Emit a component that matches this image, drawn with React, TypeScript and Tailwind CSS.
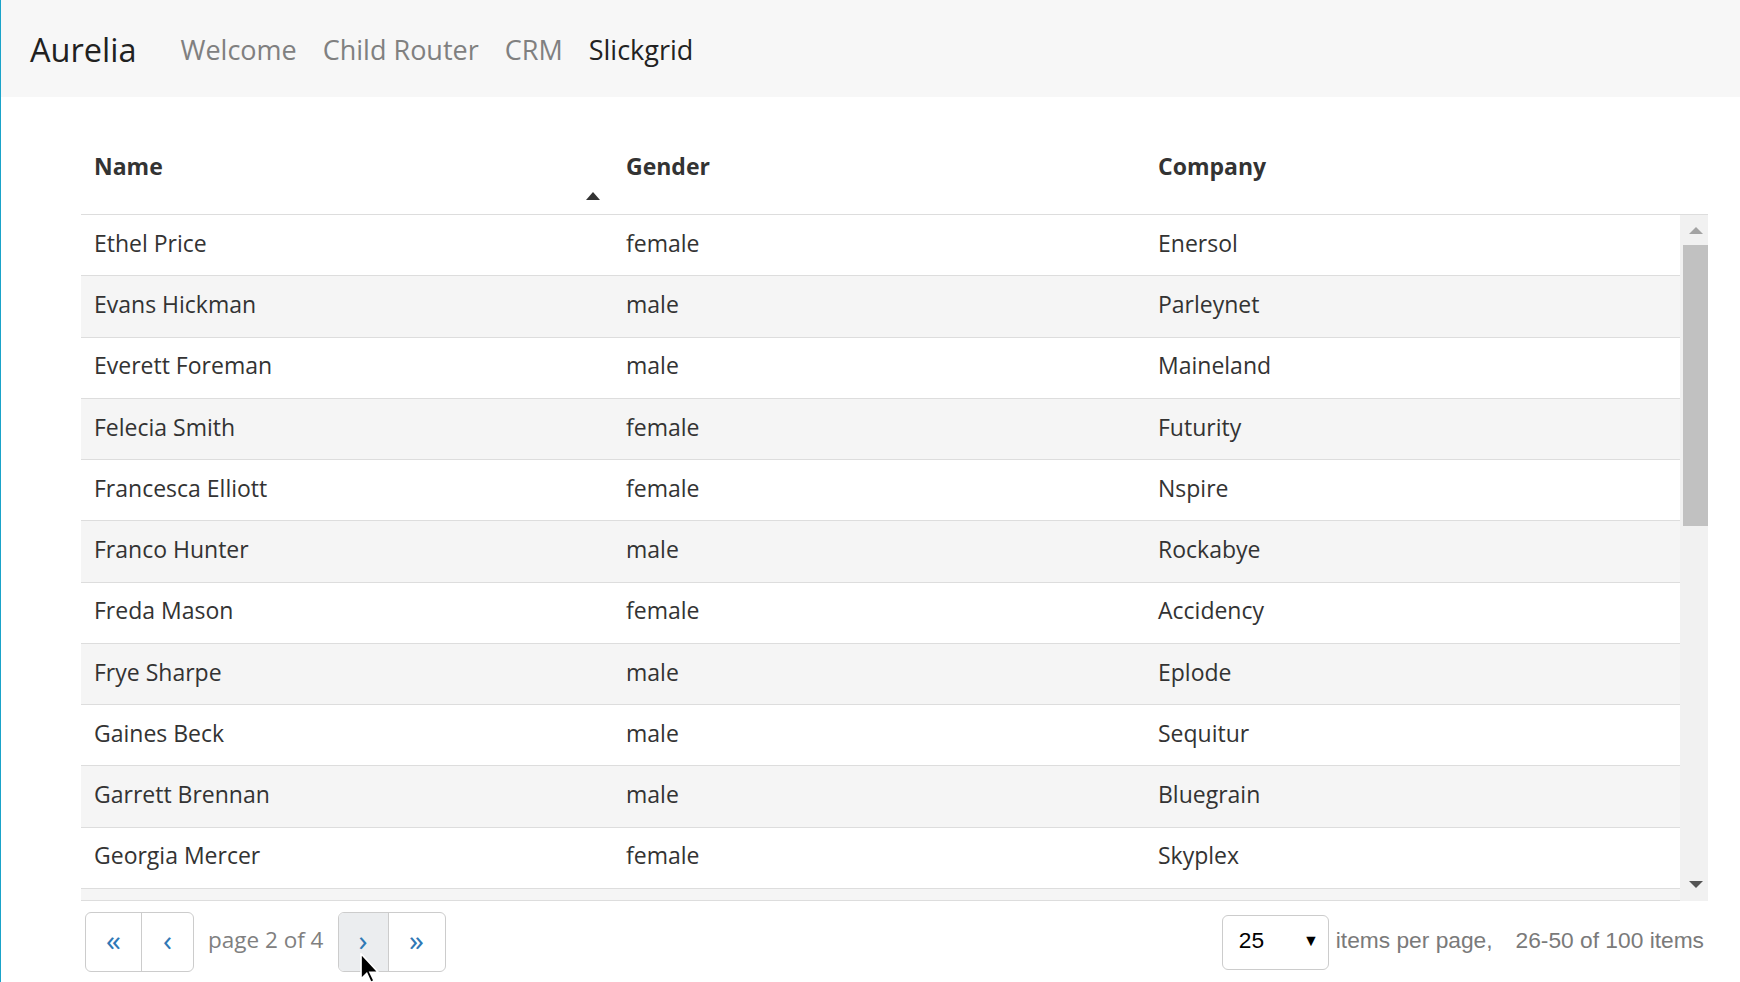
import React from "react";

interface Person {
  name: string;
  gender: string;
  company: string;
}

const people: Person[] = [
  { name: "Ethel Price", gender: "female", company: "Enersol" },
  { name: "Evans Hickman", gender: "male", company: "Parleynet" },
  { name: "Everett Foreman", gender: "male", company: "Maineland" },
  { name: "Felecia Smith", gender: "female", company: "Futurity" },
  { name: "Francesca Elliott", gender: "female", company: "Nspire" },
  { name: "Franco Hunter", gender: "male", company: "Rockabye" },
  { name: "Freda Mason", gender: "female", company: "Accidency" },
  { name: "Frye Sharpe", gender: "male", company: "Eplode" },
  { name: "Gaines Beck", gender: "male", company: "Sequitur" },
  { name: "Garrett Brennan", gender: "male", company: "Bluegrain" },
  { name: "Georgia Mercer", gender: "female", company: "Skyplex" },
];

const navLinks = ["Welcome", "Child Router", "CRM", "Slickgrid"];

function PagerButton({ label, className = "" }: { label: string; className?: string }) {
  return (
    <button
      className={`flex h-full items-center justify-center pb-[5px] text-[30px] leading-none text-[#2f78b5] ${className}`}
    >
      {label}
    </button>
  );
}

export default function App() {
  return (
    <div
      className="min-h-[982px] border-l border-[#1aa3c9] bg-white text-[#333]"
      style={{ fontFamily: '"Segoe UI", "Open Sans", sans-serif' }}
    >
      {/* navbar */}
      <nav className="flex h-[97px] items-center bg-[#f7f7f7] pl-[29px] pt-[4px]">
        <span className="mr-[31px] text-[32.5px] text-[#212121]">Aurelia</span>
        {navLinks.map((link) => (
          <a
            key={link}
            className={`px-[13px] text-[27px] ${link === "Slickgrid" ? "text-[#222]" : "text-[#808080]"}`}
          >
            {link}
          </a>
        ))}
      </nav>

      <div className="pl-[80px] pr-[32px] pt-[40px]">
        {/* header */}
        <div className="grid h-[78px] grid-cols-[532px_532px_1fr] border-b border-[#dddddd] text-[23px] font-bold">
          <div className="relative pl-[13px] pt-[14px] leading-[30px]">
            Name
            <span className="absolute right-[13px] top-[55px] h-0 w-0 border-x-[7px] border-b-[8px] border-x-transparent border-b-[#333]" />
          </div>
          <div className="pl-[13px] pt-[14px] leading-[30px]">Gender</div>
          <div className="pl-[13px] pt-[14px] leading-[30px]">Company</div>
        </div>

        {/* body */}
        <div className="flex h-[686px]">
          <div className="flex flex-1 flex-col">
            {people.map((p, i) => (
              <div
                key={p.name}
                className={`grid h-[61.25px] shrink-0 grid-cols-[532px_532px_1fr] items-center border-b border-[#dddddd] pb-[4px] text-[23px] ${
                  i % 2 === 1 ? "bg-[#f5f5f5]" : "bg-white"
                }`}
              >
                <span className="pl-[13px]">{p.name}</span>
                <span className="pl-[13px]">{p.gender}</span>
                <span className="pl-[13px]">{p.company}</span>
              </div>
            ))}
            <div className="h-[12px] border-b border-[#dddddd] bg-[#f5f5f5]" />
          </div>

          {/* vertical scrollbar */}
          <div className="flex w-[28px] flex-col border-l-[3px] border-[#f1f1f1] bg-[#f1f1f1]">
            <div className="flex h-[30px] items-center justify-center">
              <span className="h-0 w-0 border-x-[7px] border-b-[7px] border-x-transparent border-b-[#a3a3a3]" />
            </div>
            <div className="h-[281px] bg-[#c1c1c1]" />
            <div className="flex-1" />
            <div className="flex h-[30px] items-center justify-center pb-[4px]">
              <span className="h-0 w-0 border-x-[7px] border-t-[7px] border-x-transparent border-t-[#555]" />
            </div>
          </div>
        </div>

        {/* pager */}
        <div className="relative mt-[11px] flex h-[60px] items-center pl-[4px]">
          <div className="flex h-full overflow-hidden rounded-[6px] border border-[#cccccc]">
            <PagerButton label="«" className="w-[56px] border-r border-[#cccccc]" />
            <PagerButton label="‹" className="w-[51px]" />
          </div>
          <span className="px-[14px] pb-[4px] text-[22.5px] text-[#808080]">page 2 of 4</span>
          <div className="flex h-full overflow-hidden rounded-[6px] border border-[#cccccc]">
            <PagerButton label="›" className="w-[50px] border-r border-[#cccccc] bg-[#ebedef]" />
            <PagerButton label="»" className="w-[56px]" />
          </div>

          <div
            className="ml-auto flex items-center text-[22.75px] text-[#7a7a7a]"
            style={{ fontFamily: '"Liberation Sans", Arial, sans-serif' }}
          >
            <div className="mr-[7px] flex h-[55px] w-[107px] items-center justify-between rounded-[6px] border border-[#cccccc] pb-[3px] pl-[16px] pr-[9px] text-black">
              <span>25</span>
              <span className="text-[16px]">▼</span>
            </div>
            <span className="pb-[3px]">items per page,</span>
            <span className="ml-[23px] mr-[4px] pb-[3px]">26-50 of 100 items</span>
          </div>

          {/* mouse cursor */}
          <svg
            className="absolute left-[279px] top-[41px]"
            width="20"
            height="31"
            viewBox="0 0 12 19"
          >
            <path d="M0.5 0.5 L0.5 16 L4 12.5 L6.5 18 L8.5 17 L6 11.8 L11 11.8 Z" fill="#000" stroke="#fff" strokeWidth="1" />
          </svg>
        </div>
      </div>
    </div>
  );
}
